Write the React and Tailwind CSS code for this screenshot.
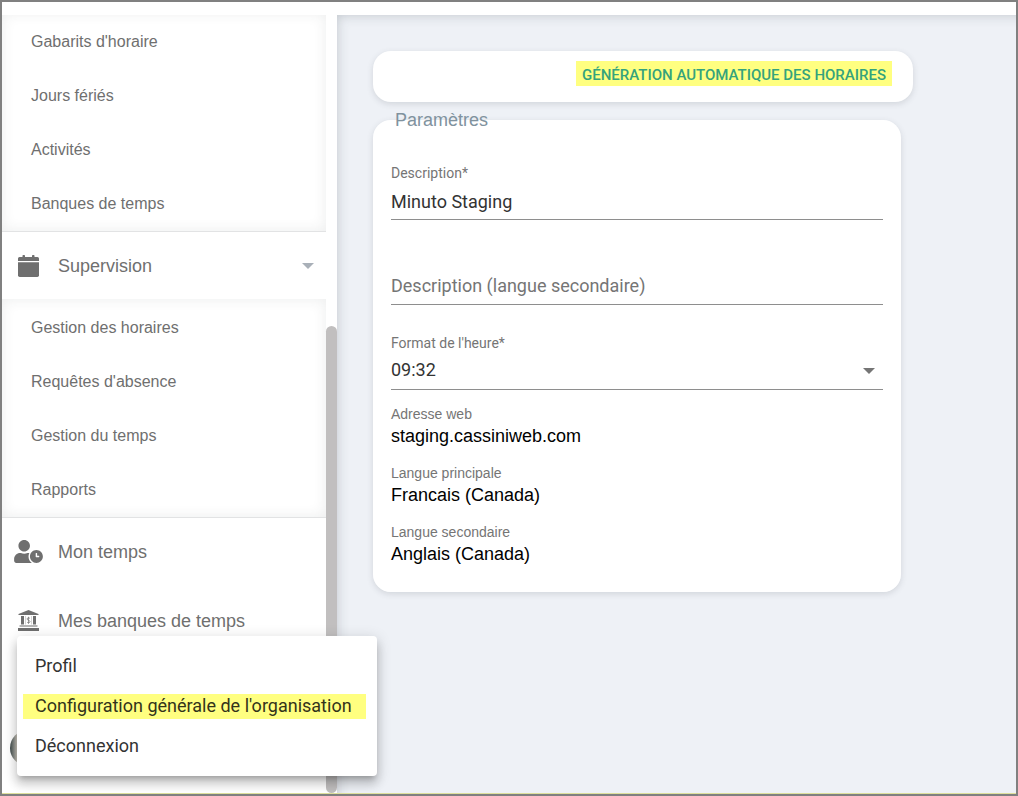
import React, { useState } from 'react';
import { FaUserClock } from 'react-icons/fa';

const planningLinks = ["Gabarits d'horaire", 'Jours fériés', 'Activités', 'Banques de temps'];
const supervisionLinks = ['Gestion des horaires', "Requêtes d'absence", 'Gestion du temps', 'Rapports'];

const details = [
  { label: 'Adresse web', value: 'staging.cassiniweb.com' },
  { label: 'Langue principale', value: 'Francais (Canada)' },
  { label: 'Langue secondaire', value: 'Anglais (Canada)' }
];

function CalendarIcon() {
  return (
    <svg viewBox="0 0 21 22" className="h-[22px] w-[21px]" fill="currentColor" aria-hidden="true">
      <path d="M0 6V3.5Q0 2 1.5 2H4.500V.8Q4.500 0 5.300 0H6.200Q7 0 7 .8V2H14V.8Q14 0 14.800 0H15.700Q16.500 0 16.500 .8V2H19.500Q21 2 21 3.500V6Z" />
      <path d="M0 7.300H21V20.300Q21 22 19.300 22H1.700Q0 22 0 20.300Z" />
    </svg>
  );
}

function BankIcon() {
  return (
    <svg viewBox="0 0 21 21" className="size-[21px]" aria-hidden="true">
      <g fill="currentColor">
        <path d="M10.500 0 20.500 4V5H.5V4Z" />
        <path d="M3 6H6V14.500H3ZM15 6H18V14.500H15Z" />
        <path d="M1.500 15.500H19.500V16.500H1.500ZM0 18H21V21H0Z" />
      </g>
      <path
        d="M12 8.600C11.500 7.600 9 7.600 9 9S12 10 12 11.600 9.500 13 9 12M10.500 6.800V13.800"
        fill="none"
        stroke="currentColor"
        strokeWidth="0.7"
      />
      <path d="M7.500 6V14.500M13.500 6V14.500" stroke="currentColor" strokeWidth="0.3" />
    </svg>
  );
}

function Caret({ className }) {
  return (
    <svg viewBox="0 0 12 6" className={className} fill="currentColor" aria-hidden="true">
      <path d="M0 0H12L6 6Z" />
    </svg>
  );
}

function SubMenu({ links }) {
  return (
    <ul className="shrink-0 border-b border-[#e2e3e4] pt-0.5 shadow-[inset_0_0_14px_rgba(40,50,50,0.09)]">
      {links.map((link) => (
        <li key={link}>
          <a href="#" className="flex h-[54px] items-center pl-[29px] text-base">
            {link}
          </a>
        </li>
      ))}
    </ul>
  );
}

function NavRow({ icon, label, children }) {
  return (
    <a href="#" className="flex h-[67px] shrink-0 items-center pr-3 text-lg">
      <span className="flex w-[52px] justify-center">{icon}</span>
      <span className="grow pl-1">{label}</span>
      {children}
    </a>
  );
}

function Sidebar() {
  return (
    <div className="flex w-[335px] shrink-0 overflow-hidden bg-white">
      <nav className="flex grow flex-col overflow-hidden text-[#6f6f6f]">
        <div className="-mt-0.5 flex flex-col">
          <SubMenu links={planningLinks} />
          <NavRow icon={<CalendarIcon />} label="Supervision">
            <Caret className="h-1.5 w-3 text-[#a9b0b8]" />
          </NavRow>
          <SubMenu links={supervisionLinks} />
          <div className="flex flex-col gap-0.5">
            <NavRow icon={<FaUserClock className="h-[23px] w-[29px]" />} label="Mon temps" />
            <NavRow icon={<BankIcon />} label="Mes banques de temps" />
          </div>
        </div>
      </nav>
      <div className="flex w-[11px] flex-col justify-end">
        <div className="h-[60%] rounded-full bg-[#c1bfbf]" />
      </div>
    </div>
  );
}

function UserMenu() {
  return (
    <div className="absolute bottom-[18px] left-[15px] w-[360px] rounded bg-white py-2.5 font-[Roboto,sans-serif] text-lg text-[#333] shadow-[0_5px_5px_-3px_rgba(0,0,0,0.2),0_8px_10px_1px_rgba(0,0,0,0.14),0_3px_14px_2px_rgba(0,0,0,0.12)]">
      <button type="button" className="flex h-10 w-full items-center pl-[18px]">
        Profil
      </button>
      <button type="button" className="flex h-10 w-full items-center px-1.5">
        <span className="h-[25px] w-[343px] bg-[#ffff80] pl-3 text-left leading-6 text-[#33331a]">
          Configuration générale de l'organisation
        </span>
      </button>
      <button type="button" className="flex h-10 w-full items-center pl-[18px]">
        Déconnexion
      </button>
    </div>
  );
}

export default function App() {
  const [description, setDescription] = useState('Minuto Staging');
  const [secondary, setSecondary] = useState('');
  const [format, setFormat] = useState('09:32');

  return (
    <div className="relative flex h-screen flex-col overflow-hidden border-2 border-[#808080] bg-white font-['Liberation_Sans',Arial,sans-serif]">
      <header className="h-[13px] shrink-0 bg-white" />
      <div className="flex min-h-0 grow border-b border-[#dedf9c]">
        <Sidebar />
        <main className="grow bg-[#eef1f6] px-9 pt-9 shadow-[inset_7px_7px_12px_-7px_rgba(60,70,80,0.25)]">
          <div className="flex w-full max-w-[540px] justify-end rounded-[18px] bg-white pt-2.5 pr-[21px] pb-4 shadow-[0_2px_6px_rgba(60,70,80,0.16)]">
            <button
              type="button"
              className="h-[25px] bg-[#ffff80] px-1.5 font-[Roboto,sans-serif] text-[15px] leading-7 font-medium text-[#35a37c] uppercase"
            >
              Génération automatique des horaires
            </button>
          </div>

          <fieldset className="mt-[7px] w-full max-w-[528px] rounded-[18px] bg-white px-[18px] pb-[26px] shadow-[0_2px_6px_rgba(60,70,80,0.16)]">
            <legend className="px-1 text-lg leading-[22px] text-[#80929e]">Paramètres</legend>
            <div className="flex flex-col gap-7 pt-8 font-[Roboto,sans-serif] text-[#333]">
              <div className="flex flex-col">
                <label htmlFor="description" className="text-sm leading-5 text-[#757575]">
                  Description*
                </label>
                <input
                  id="description"
                  required
                  value={description}
                  onChange={(e) => setDescription(e.target.value)}
                  className="h-[37px] border-b border-[#8e8e8e] text-lg outline-none"
                />
              </div>
              <input
                aria-label="Description (langue secondaire)"
                placeholder="Description (langue secondaire)"
                value={secondary}
                onChange={(e) => setSecondary(e.target.value)}
                className="mt-5 h-[37px] border-b border-[#8e8e8e] pb-0.5 text-lg outline-none placeholder:text-[#757575]"
              />
              <div className="relative flex flex-col">
                <label htmlFor="format" className="text-sm leading-5 text-[#757575]">
                  Format de l'heure*
                </label>
                <select
                  id="format"
                  value={format}
                  onChange={(e) => setFormat(e.target.value)}
                  className="h-[37px] appearance-none border-b border-[#8e8e8e] pb-0.5 text-lg outline-none"
                >
                  <option>09:32</option>
                  <option>9:32 AM</option>
                </select>
                <Caret className="pointer-events-none absolute right-2 bottom-4 h-1.5 w-3 text-[#757575]" />
              </div>
            </div>
            <dl className="mt-3.5 flex flex-col gap-[15px]">
              {details.map((detail) => (
                <div key={detail.label}>
                  <dt className="text-sm leading-5 text-[#757575]">{detail.label}</dt>
                  <dd className="text-lg leading-6 text-black">{detail.value}</dd>
                </div>
              ))}
            </dl>
          </fieldset>
        </main>
      </div>

      <div className="absolute bottom-7 left-2 size-9 rounded-full bg-linear-to-r from-[#3f4a4a] via-[#cfcac0] via-20% to-[#777]" />
      <UserMenu />
    </div>
  );
}
